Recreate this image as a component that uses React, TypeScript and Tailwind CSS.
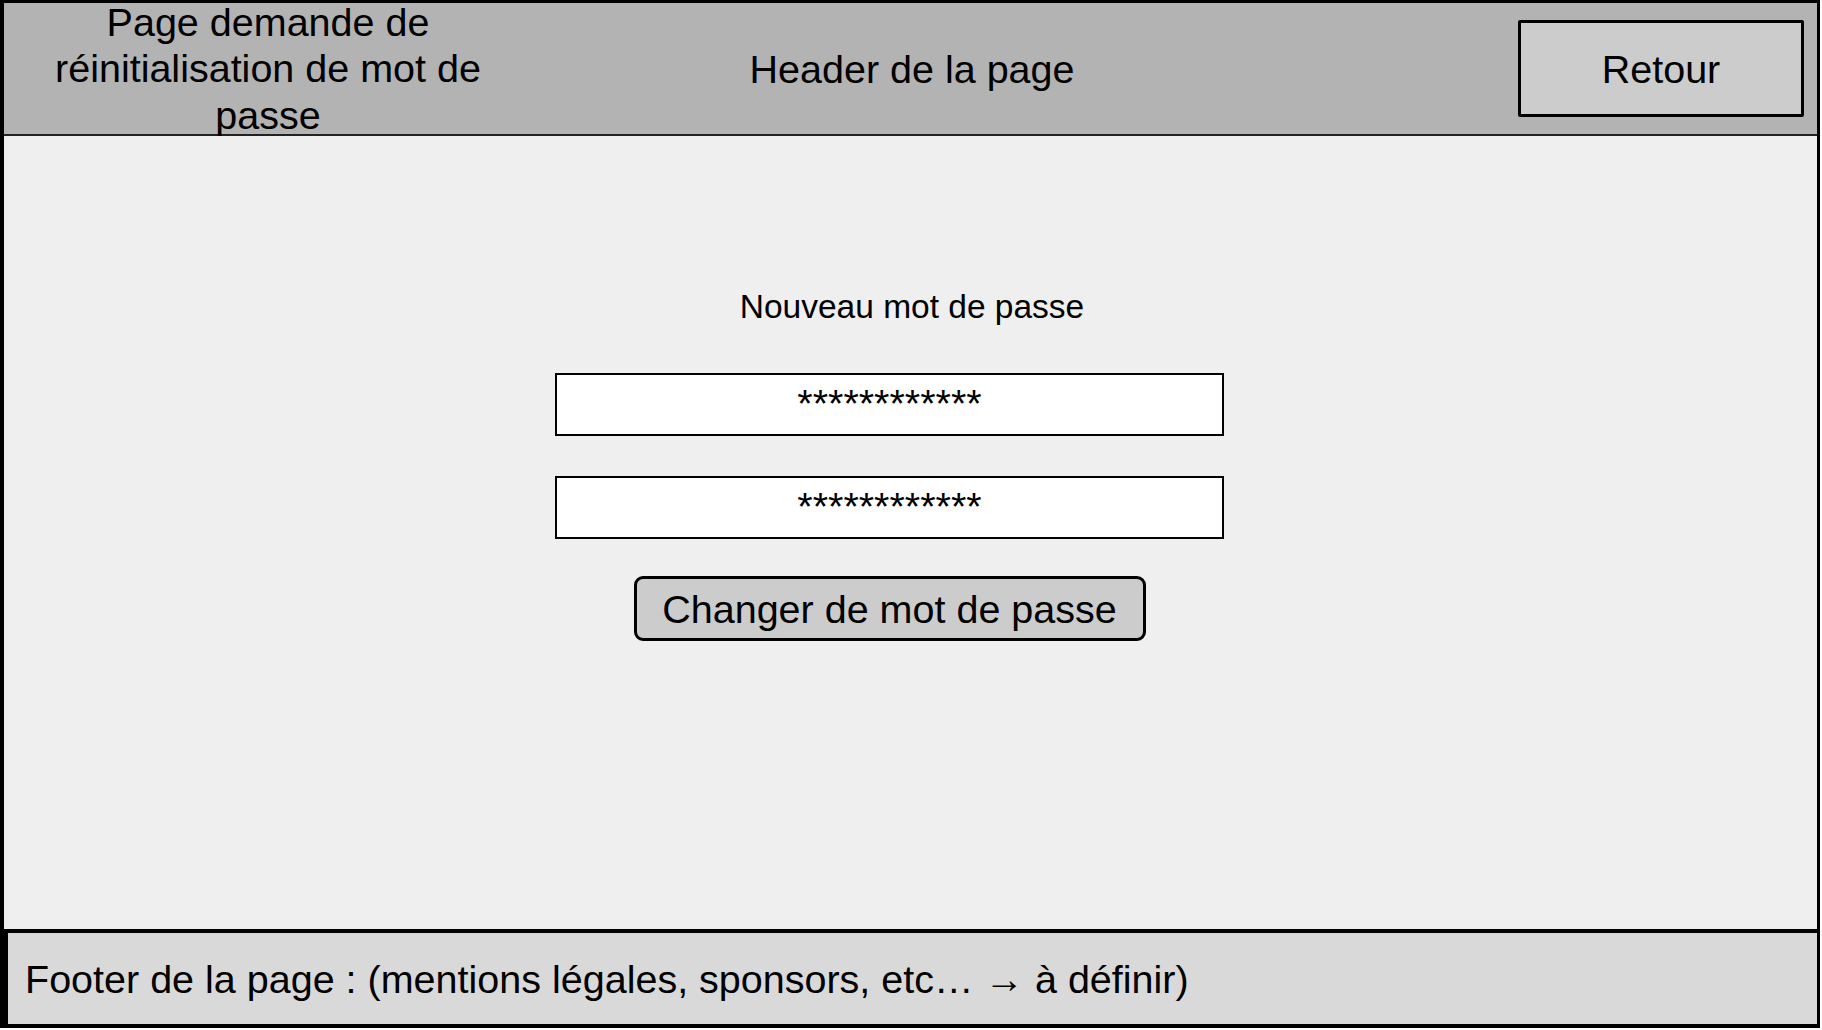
export default function App() {
  return (
    <div className="w-[1822px] h-[1030px] bg-white text-black font-['Liberation_Sans',Arial,sans-serif]">
      <div className="w-[1820px] h-[1028px] flex flex-col border-l-[4px] border-t-[3px] border-r-[3px] border-black">
        {/* header */}
        <header className="h-[133px] shrink-0 grid grid-cols-1 items-center bg-[#b3b3b3] border-b-2 border-[#222]">
          <div className="col-start-1 row-start-1 justify-self-start -my-[12px] w-[528px] text-center text-[39.5px] leading-[46.5px]">
            Page demande de réinitialisation de mot de passe
          </div>
          <div className="col-start-1 row-start-1 justify-self-center text-[39.5px] leading-[46px] ml-[3px]">
            Header de la page
          </div>
          <button className="col-start-1 row-start-1 justify-self-end mr-[13px] w-[286px] h-[97px] bg-[#cccccc] border-[3px] border-black rounded-[2px] text-[39.5px] leading-[44px]">
            Retour
          </button>
        </header>

        {/* contenu */}
        <main className="flex-1 bg-[#efefef] pt-[151px] flex flex-col">
          <p className="self-center ml-[3px] text-[33.5px] leading-[40px]">Nouveau mot de passe</p>

          <div className="ml-[551px] mt-[46px] w-[669px] flex flex-col items-center">
            <div className="w-full h-[63px] bg-white border-2 border-black pt-[6px] text-center text-[39.5px] leading-[44px]">
              ************
            </div>
            <div className="w-full h-[63px] mt-[40px] bg-white border-2 border-black pt-[6px] text-center text-[39.5px] leading-[44px]">
              ************
            </div>
            <button className="mt-[37px] w-[512px] h-[65px] bg-[#cccccc] border-[3px] border-black rounded-[9px] text-[39.5px] leading-[44px]">
              Changer de mot de passe
            </button>
          </div>
        </main>

        {/* footer */}
        <footer className="h-[99px] shrink-0 flex items-center bg-[#d9d9d9] border-t-[4px] border-b-[4px] border-l-[4px] border-black pl-[17px] text-[39.5px] leading-[44px]">
          Footer de la page : (mentions légales, sponsors, etc… → à définir)
        </footer>
      </div>
    </div>
  );
}
